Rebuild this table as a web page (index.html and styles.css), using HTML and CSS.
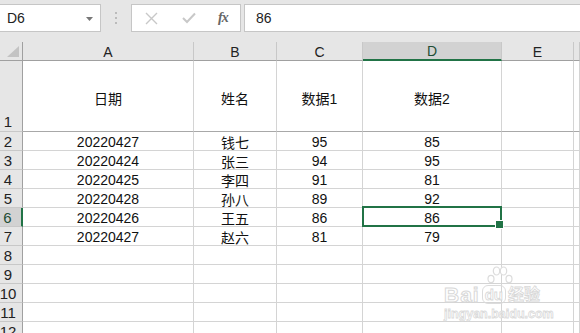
FILE: index.html
```html
<!DOCTYPE html>
<html lang="zh-CN">
<head>
<meta charset="utf-8">
<title>工作表</title>
<link rel="stylesheet" href="styles.css">
</head>
<body>
<div class="app">
  <div class="formula-bar">
    <div class="name-box">
      <span class="name-text">D6</span>
      <svg class="caret" width="7" height="4" viewBox="0 0 7 4"><polygon points="0,0 7,0 3.5,4" fill="#777"/></svg>
    </div>
    <div class="grip">
      <svg width="3" height="12" viewBox="0 0 3 12"><rect x="0" y="0" width="2" height="2" fill="#bbb"/><rect x="0" y="5" width="2" height="2" fill="#bbb"/><rect x="0" y="10" width="2" height="2" fill="#bbb"/></svg>
    </div>
    <div class="fx-buttons">
      <svg class="btn-icon" width="13" height="13" viewBox="0 0 13 13"><path d="M1 1 L12 12 M12 1 L1 12" stroke="#c8c8c8" stroke-width="1.4" fill="none"/></svg>
      <svg class="btn-icon" width="14" height="12" viewBox="0 0 14 12"><path d="M1 6 L5 10 L13 1.5" stroke="#c8c8c8" stroke-width="2" fill="none"/></svg>
      <span class="fx">fx</span>
    </div>
    <div class="formula-input">86</div>
  </div>

  <div class="sheet">
    <div class="corner"><svg width="12" height="11" viewBox="0 0 12 11"><polygon points="12,0 12,11 0,11" fill="#c3c3c3"/></svg></div>
    <div class="ch">A</div>
    <div class="ch">B</div>
    <div class="ch">C</div>
    <div class="ch ch-active">D</div>
    <div class="ch">E</div>
    <div class="ch"></div>

    <div class="rh rh-tall">1</div>
    <div class="cell cell-tall">日期</div>
    <div class="cell cell-tall">姓名</div>
    <div class="cell cell-tall">数据1</div>
    <div class="cell cell-tall">数据2</div>
    <div class="cell cell-tall"></div>
    <div class="cell cell-tall"></div>

    <div class="rh">2</div>
    <div class="cell">20220427</div>
    <div class="cell">钱七</div>
    <div class="cell">95</div>
    <div class="cell">85</div>
    <div class="cell"></div>
    <div class="cell"></div>

    <div class="rh">3</div>
    <div class="cell">20220424</div>
    <div class="cell">张三</div>
    <div class="cell">94</div>
    <div class="cell">95</div>
    <div class="cell"></div>
    <div class="cell"></div>

    <div class="rh">4</div>
    <div class="cell">20220425</div>
    <div class="cell">李四</div>
    <div class="cell">91</div>
    <div class="cell">81</div>
    <div class="cell"></div>
    <div class="cell"></div>

    <div class="rh">5</div>
    <div class="cell">20220428</div>
    <div class="cell">孙八</div>
    <div class="cell">89</div>
    <div class="cell">92</div>
    <div class="cell"></div>
    <div class="cell"></div>

    <div class="rh rh-active">6</div>
    <div class="cell">20220426</div>
    <div class="cell">王五</div>
    <div class="cell">86</div>
    <div class="cell cell-selected">86</div>
    <div class="cell"></div>
    <div class="cell"></div>

    <div class="rh">7</div>
    <div class="cell">20220427</div>
    <div class="cell">赵六</div>
    <div class="cell">81</div>
    <div class="cell">79</div>
    <div class="cell"></div>
    <div class="cell"></div>

    <div class="rh">8</div>
    <div class="cell"></div><div class="cell"></div><div class="cell"></div><div class="cell"></div><div class="cell"></div><div class="cell"></div>
    <div class="rh">9</div>
    <div class="cell"></div><div class="cell"></div><div class="cell"></div><div class="cell"></div><div class="cell"></div><div class="cell"></div>
    <div class="rh">10</div>
    <div class="cell"></div><div class="cell"></div><div class="cell"></div><div class="cell"></div><div class="cell"></div><div class="cell"></div>
    <div class="rh">11</div>
    <div class="cell"></div><div class="cell"></div><div class="cell"></div><div class="cell"></div><div class="cell"></div><div class="cell"></div>
    <div class="rh">12</div>
    <div class="cell"></div><div class="cell"></div><div class="cell"></div><div class="cell"></div><div class="cell"></div><div class="cell"></div>
  </div>

  <div class="watermark">
    <svg class="paw" width="28" height="22" viewBox="0 0 28 22">
      <g fill="#fff" stroke="#dcdcdc" stroke-width="1.2">
        <ellipse cx="5" cy="13" rx="3" ry="3.6"/>
        <ellipse cx="10.5" cy="5" rx="3.2" ry="4"/>
        <ellipse cx="17.5" cy="5" rx="3.2" ry="4"/>
        <ellipse cx="23" cy="13" rx="3" ry="3.6"/>
      </g>
    </svg>
    <div class="wm-line">
      <span class="wm-bai">Bai</span><span class="wm-du">du</span><span class="wm-jy">经验</span>
    </div>
    <div class="wm-url">jingyan.baidu.com</div>
  </div>
</div>
</body>
</html>
```

FILE: styles.css
```css
* {
  box-sizing: border-box;
}

html, body {
  margin: 0;
  padding: 0;
  background: #ffffff;
}

.app {
  position: relative;
  width: 580px;
  height: 333px;
  overflow: hidden;
  font-family: "Liberation Sans", "Noto Sans CJK SC", sans-serif;
  font-size: 14px;
  color: #111;
}

/* ---------- formula bar ---------- */
.formula-bar {
  display: flex;
  align-items: flex-start;
  height: 42px;
  padding-top: 4px;
  background: #e6e6e6;
}

.name-box {
  display: flex;
  align-items: center;
  justify-content: space-between;
  width: 102px;
  height: 28px;
  margin-left: -1px;
  padding: 0 7px 0 7px;
  background: #ffffff;
  border: 1px solid #c6c6c6;
  color: #222;
}

.caret {
  margin-top: 1px;
}

.grip {
  display: flex;
  justify-content: center;
  align-items: center;
  width: 30px;
  height: 28px;
  padding-left: 1px;
}

.fx-buttons {
  display: flex;
  align-items: center;
  width: 110px;
  height: 28px;
  padding-left: 13px;
  background: #ffffff;
  border: 1px solid #c6c6c6;
}

.btn-icon {
  margin-right: 24px;
}

.btn-icon + .btn-icon {
  margin-right: 22px;
}

.fx {
  font-family: "Liberation Serif", "DejaVu Serif", serif;
  font-style: italic;
  font-weight: bold;
  font-size: 14px;
  color: #666;
  letter-spacing: -1px;
}

.formula-input {
  flex: 1;
  height: 28px;
  margin-left: 3px;
  margin-right: -2px;
  padding-left: 11px;
  line-height: 26px;
  background: #ffffff;
  border: 1px solid #c6c6c6;
  color: #222;
}

/* ---------- grid ---------- */
.sheet {
  display: grid;
  grid-template-columns: 23px 171px 83px 86px 139px 72px 1fr;
  grid-template-rows: 19px 71px repeat(11, 19px);
}

.corner {
  display: flex;
  align-items: flex-end;
  justify-content: flex-end;
  padding: 0 3px 3px 0;
  background: #e6e6e6;
  border-right: 1px solid #a0a0a0;
  border-bottom: 1px solid #a0a0a0;
}

.ch {
  display: flex;
  align-items: center;
  justify-content: center;
  background: #e6e6e6;
  border-right: 1px solid #c8c8c8;
  border-bottom: 1px solid #a0a0a0;
  color: #222;
  padding-top: 1px;
}

.ch-active {
  background: #d2d2d2;
  border-bottom: 2px solid #217346;
  color: #1f4d35;
}

.rh {
  display: flex;
  align-items: center;
  justify-content: center;
  padding-right: 6px;
  padding-top: 1px;
  background: #e6e6e6;
  border-right: 1px solid #a0a0a0;
  border-bottom: 1px solid #c8c8c8;
  color: #222;
  font-size: 15px;
}

.rh-tall {
  align-items: flex-end;
  padding-bottom: 1px;
}

.rh-active {
  background: #d2d2d2;
  border-right: 2px solid #217346;
  color: #1f4d35;
}

.cell {
  display: flex;
  align-items: center;
  justify-content: center;
  padding-top: 1px;
  border-right: 1px solid #d4d4d4;
  border-bottom: 1px solid #d4d4d4;
  white-space: nowrap;
}

.cell-tall {
  padding-top: 4px;
  border-bottom-color: #a8a8a8;
}

.cell-selected {
  position: relative;
  z-index: 2;
}

.cell-selected::after {
  content: "";
  position: absolute;
  top: -2px;
  left: -1px;
  right: -1px;
  bottom: -1px;
  border: 2px solid #217346;
}

.cell-selected::before {
  content: "";
  position: absolute;
  right: -3px;
  bottom: -3px;
  width: 7px;
  height: 7px;
  background: #217346;
  border: 1px solid #ffffff;
  z-index: 1;
}

/* ---------- watermark ---------- */
.watermark {
  position: absolute;
  left: 444px;
  top: 266px;
  width: 110px;
  pointer-events: none;
  font-family: "Liberation Sans", "Noto Sans CJK SC", sans-serif;
  font-weight: bold;
  color: #ffffff;
}

.paw {
  display: block;
  margin-left: 42px;
}

.wm-line {
  display: flex;
  align-items: flex-end;
  margin-top: -3px;
  height: 19px;
}

.wm-bai {
  font-size: 21px;
  line-height: 19px;
  -webkit-text-stroke: 1px #d8d8d8;
  letter-spacing: 1px;
}

.wm-du {
  font-size: 15px;
  line-height: 17px;
  padding: 0 2px;
  margin-left: 2px;
  border: 1px solid #dcdcdc;
  border-radius: 6px;
  -webkit-text-stroke: 0.8px #d8d8d8;
}

.wm-jy {
  font-size: 16px;
  line-height: 19px;
  margin-left: 2px;
  -webkit-text-stroke: 0.8px #d8d8d8;
}

.wm-url {
  margin-top: 3px;
  font-size: 12.5px;
  line-height: 14px;
  -webkit-text-stroke: 0.8px #dadada;
}
```
